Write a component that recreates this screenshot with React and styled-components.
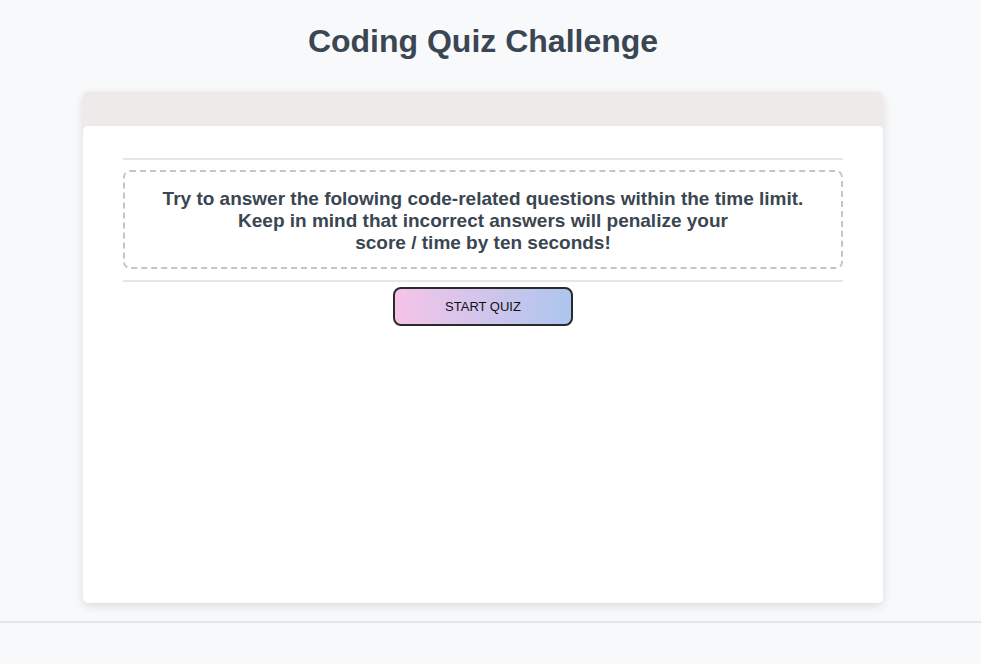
import React from "react";
import styled, { createGlobalStyle } from "styled-components";

const Global = createGlobalStyle`
  html, body { margin: 0; padding: 0; background: #f8f9fb; }
  body { font-family: "Liberation Sans", Arial, sans-serif; color: #3a4651; }
`;

const Page = styled.div`
  display: flex;
  flex-direction: column;
  min-height: 664px;
`;

const Main = styled.main`
  padding-right: 15px;
  display: flex;
  flex-direction: column;
  align-items: center;
`;

const Title = styled.h1`
  margin: 22px 0 0;
  font-size: 32px;
  line-height: 38px;
  font-weight: 700;
  color: #3a4651;
  text-align: center;
`;

const Card = styled.section`
  margin-top: 32px;
  width: 800px;
  border-radius: 5px;
  box-shadow: 0 3px 10px rgba(0, 0, 0, 0.12);
  display: flex;
  flex-direction: column;
`;

const CardHeader = styled.div`
  height: 38px;
  margin-bottom: -4px;
  border-radius: 5px 5px 0 0;
  background: #eeeae9;
`;

const CardBody = styled.div`
  position: relative;
  height: 477px;
  box-sizing: border-box;
  padding: 32px 40px 0;
  display: flex;
  flex-direction: column;
  align-items: center;
  border-radius: 5px;
  background: #fff;
`;

const Rule = styled.hr`
  align-self: stretch;
  border: 0;
  height: 2px;
  background: #e6e6e6;
  margin: ${(p) => p.$m};
`;

const Intro = styled.div`
  align-self: stretch;
  box-sizing: border-box;
  border: 2px dashed #c3c5c9;
  border-radius: 7px;
  padding: 16px 20px 13px;
  text-align: center;
  font-size: 19px;
  line-height: 22px;
  font-weight: 700;
  color: #3a4651;
`;

const StartButton = styled.button`
  width: 180px;
  height: 39px;
  box-sizing: border-box;
  border: 2px solid #2a2a2a;
  border-radius: 8px;
  background: linear-gradient(90deg, #f5c4e8 0%, #adc6ef 100%);
  font-family: "Liberation Sans", Arial, sans-serif;
  font-size: 13px;
  color: #111;
  cursor: pointer;
`;

const Footer = styled.footer`
  margin-top: 18px;
  border-top: 2px solid #e4e6ea;
  flex: 1;
`;

export default function App() {
  return (
    <>
      <Global />
      <Page>
        <Main>
          <Title>Coding Quiz Challenge</Title>
          <Card>
            <CardHeader />
            <CardBody>
              <Rule $m="0 0 10px" />
              <Intro>
                Try to answer the folowing code-related questions within the time limit.
                <br />
                Keep in mind that incorrect answers will penalize your
                <br />
                score / time by ten seconds!
              </Intro>
              <Rule $m="11px 0 5px" />
              <StartButton>START QUIZ</StartButton>
            </CardBody>
          </Card>
        </Main>
        <Footer />
      </Page>
    </>
  );
}
